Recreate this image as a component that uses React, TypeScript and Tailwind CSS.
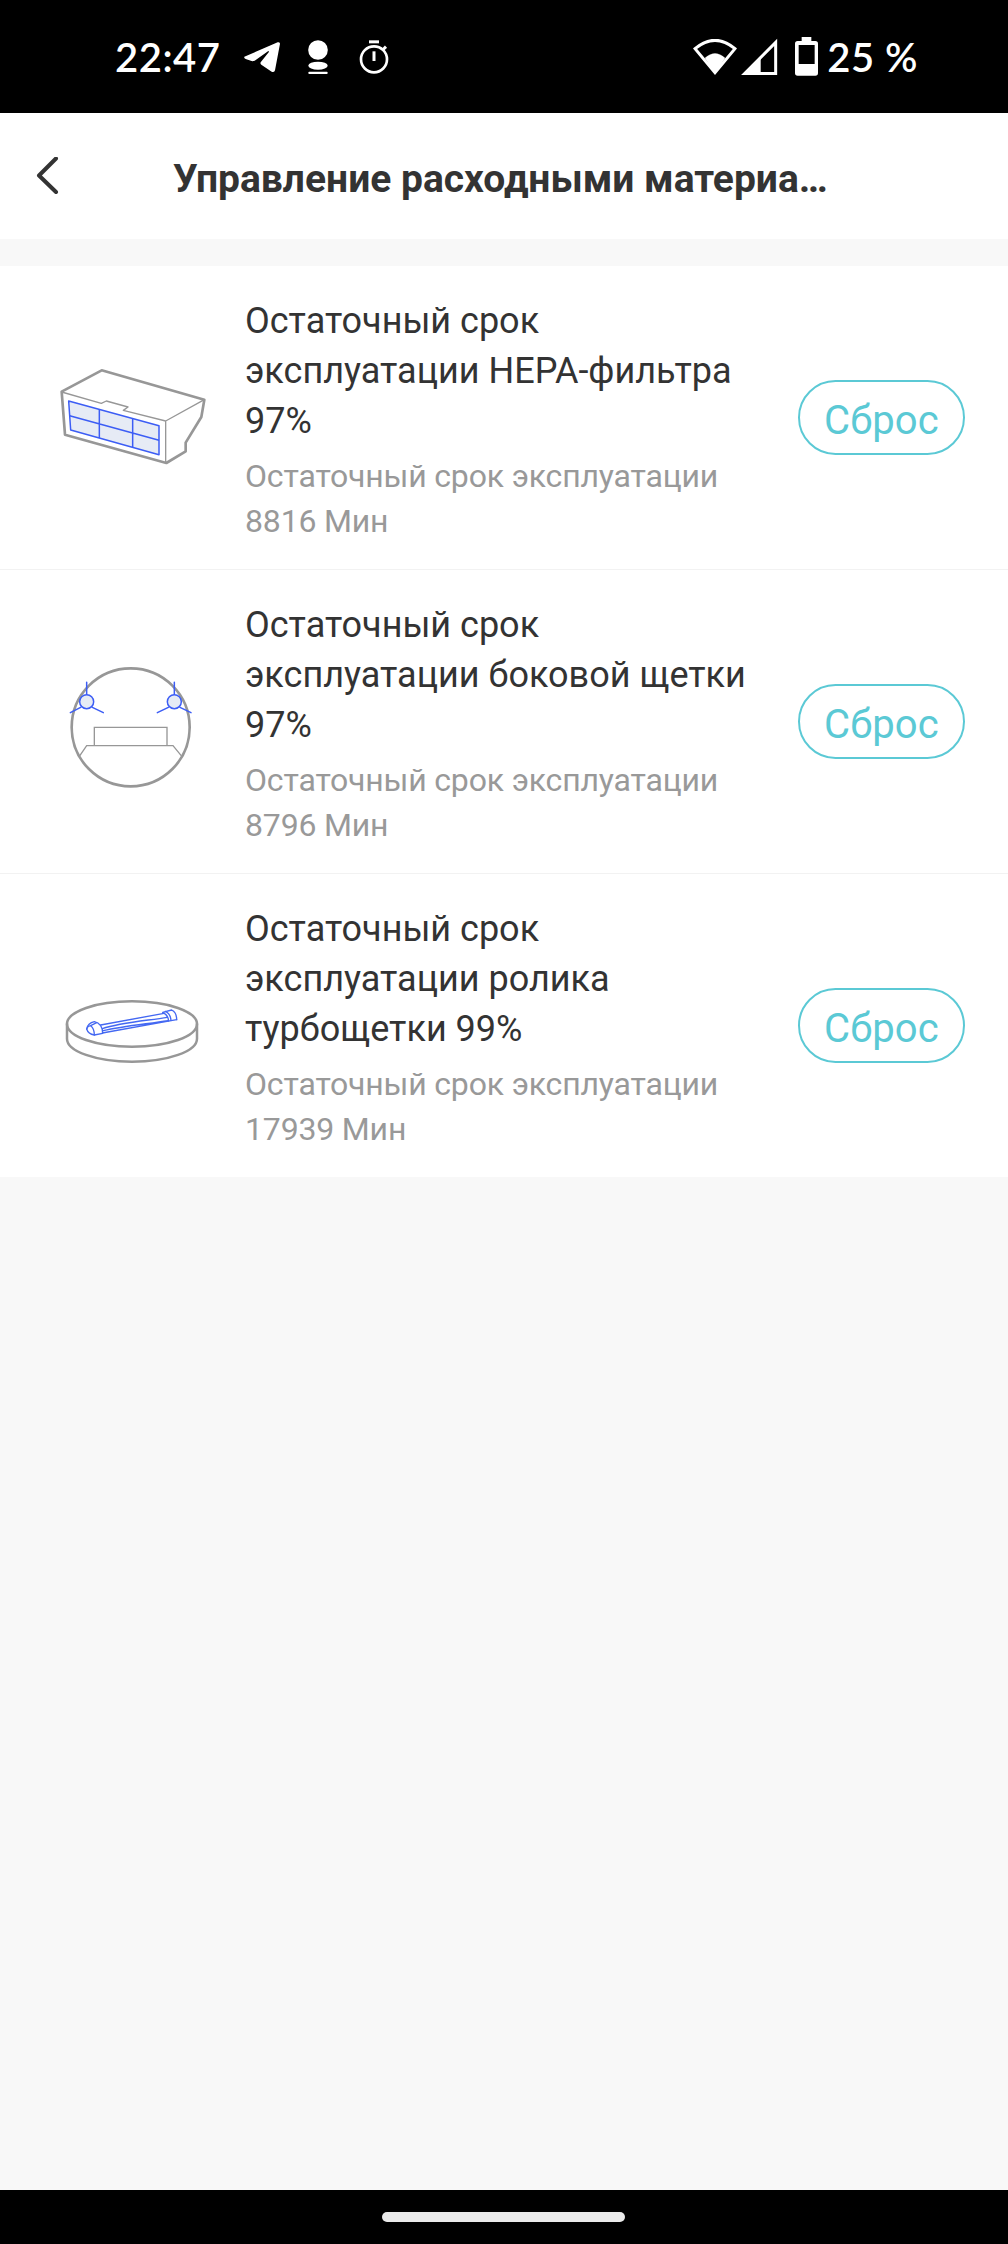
import React from 'react';

interface ConsumableRowProps {
    title: string[];
    minutes: string;
    icon: React.ComponentType;
    last?: boolean;
}

function FilterIcon() {
    return (
        <svg className="h-40 w-40" viewBox="30 -36 480 480" fill="none" strokeLinejoin="round">
            <path d="M65 125L185 61L493 149L484 201L437 278V304L379 339L75 254Z" stroke="#979797" strokeWidth="8" />
            <path d="M65 126L184 160L199 153L264 171L250 181L377 213L493 149M377 213V339" stroke="#979797" strokeWidth="4" />
            <path d="M86 153L357 227V314L92 240Z" fill="#e6ebf5" stroke="#3c5df5" strokeWidth="4.5" />
            <path d="M89 197L357 271M178 178V264M278 205V292" stroke="#3c5df5" strokeWidth="4.5" />
        </svg>
    );
}

function SideBrushIcon() {
    return (
        <svg className="h-40 w-40" viewBox="0 -24 480 480" fill="none" strokeLinecap="round">
            <circle cx="242" cy="232" r="177" stroke="#979797" strokeWidth="8" />
            <path d="M133 287V232H351V287M90 316L110 287H369L393 316" stroke="#979797" strokeWidth="4" />
            <path d="M110 97V134M92 172L61 188M127 172L160 188" stroke="#3c5df5" strokeWidth="4.5" />
            <path d="M373 97V134M355 172L322 188M390 172L423 188" stroke="#3c5df5" strokeWidth="4.5" />
            <circle cx="110" cy="155" r="21" fill="#e6ebf5" stroke="#3c5df5" strokeWidth="4.5" />
            <circle cx="373" cy="155" r="21" fill="#e6ebf5" stroke="#3c5df5" strokeWidth="4.5" />
        </svg>
    );
}

function TurboBrushIcon() {
    return (
        <svg className="h-40 w-40" viewBox="0 -102 480 480" fill="none" strokeLinecap="round" strokeLinejoin="round">
            <ellipse cx="246" cy="132" rx="195" ry="68" stroke="#979797" strokeWidth="7.5" />
            <path d="M51 132V176C51 214 138 245 246 245S441 214 441 176V132" stroke="#979797" strokeWidth="7.5" />
            <g stroke="#4468f2" strokeWidth="4">
                <path d="M152 135L342 100M157 146C210 128 290 122 352 112M160 152C220 138 290 132 354 122M157 159L380 119" />
                <path d="M110 147C112 136 120 128 133 125C149 128 159 142 158 160L133 165C121 163 113 157 110 147Z" />
                <path d="M110 147C112 140 119 137 122 137C130 143 133 153 133 165M122 137L140 128" />
                <path d="M338 97L365 90C374 94 380 104 380 119M338 97C349 102 355 111 356 123M346 94C357 99 362 110 363 121" />
            </g>
        </svg>
    );
}

function StatusBar() {
    return (
        <div className="flex h-[113px] shrink-0 items-center bg-black pr-[90px] pl-[115px] font-['Lato',sans-serif] text-white">
            <span className="w-[129px] text-[40px] leading-none font-semibold tracking-[0.5px]">22:47</span>
            <svg className="h-9 w-9" viewBox="432 62 108 108" fill="currentColor">
                <path d="M433 115Q431 119 437 122L457 129L464 127L504 99Q509 97 506 102L482 132Q480 136 484 139L515 160Q523 164 525 156L540 76Q540 70 533 72Z" />
            </svg>
            <svg className="ml-7 h-9 w-5" viewBox="624 57 60 108" fill="currentColor">
                <circle cx="654" cy="90" r="29.5" />
                <ellipse cx="654" cy="137" rx="29" ry="12" />
                <rect x="625" y="155" width="58" height="7" rx="3" />
            </svg>
            <svg className="ml-[31px] h-9 w-[30px]" viewBox="777 57 90 108" fill="none" stroke="currentColor">
                <circle cx="822" cy="118" r="39" strokeWidth="8" />
                <path d="M807 65.500H837" strokeWidth="9" />
                <path d="M822 94V123" strokeWidth="9" />
                <path d="M848 90L858 80" strokeWidth="9" />
            </svg>
            <div className="ml-auto flex items-center">
                <svg className="h-9 w-11" viewBox="42 56 132 108" fill="none" stroke="currentColor">
                    <path d="M48 85Q108 35 168 85L108 157Z" strokeWidth="9" />
                    <path d="M78 113Q108 86 138 113L108 160Z" fill="currentColor" />
                </svg>
                <svg className="ml-1 h-[38px] w-[37px]" viewBox="186 54 111 114" fill="none" stroke="currentColor">
                    <path d="M197 160.500L290 67V160.500Z" strokeWidth="9" />
                    <path d="M190 164L245 109V164Z" fill="currentColor" stroke="none" />
                </svg>
                <svg className="ml-[17px] h-[39px] w-[23px]" viewBox="348 51 69 117" fill="currentColor">
                    <path
                        fillRule="evenodd"
                        d="M368 51H397V63H409Q417 63 417 71V159Q417 167 409 167H356Q348 167 348 159V71Q348 63 356 63H368ZM359 75V132H407V75Z"
                    />
                </svg>
                <span className="ml-[9px] text-[40px] leading-none font-semibold tracking-[0.5px]">25 %</span>
            </div>
        </div>
    );
}

function ConsumableRow({ title, minutes, icon: Icon, last }: ConsumableRowProps) {
    return (
        <div className={`flex items-center bg-white pr-[43px] pl-[50px] ${last ? 'h-[303px]' : 'h-[304px] border-b border-[#f2f2f2]'}`}>
            <Icon />
            <div className="ml-[35px] flex-1 pt-[5px] whitespace-nowrap">
                <h2 className="text-[36px] leading-[50px] text-[#333333]">
                    {title.map((line) => (
                        <span key={line} className="block">
                            {line}
                        </span>
                    ))}
                </h2>
                <p className="mt-2 text-[32px] leading-[45px] tracking-[-0.17px] text-[#999999]">
                    Остаточный срок эксплуатации
                    <br />
                    {minutes} Мин
                </p>
            </div>
            <button className="h-[75px] w-[167px] rounded-full border-2 border-[#5bc9d5] pt-1.5 text-[40px] leading-none tracking-[0.2px] text-[#5bc9d5]">
                Сброс
            </button>
        </div>
    );
}

export default function App() {
    return (
        <div className="flex h-[2244px] w-[1008px] flex-col bg-[#f8f8f8] font-['Roboto',sans-serif]">
            <StatusBar />

            <header className="flex h-[126px] shrink-0 items-center bg-white pl-9">
                <svg className="mt-0.5 h-10 w-6" viewBox="0 0 24 40" fill="none" stroke="#333333" strokeWidth="4" strokeLinecap="round" strokeLinejoin="round">
                    <path d="M20 1.500L3 18.500L20 35" />
                </svg>
                <h1 className="ml-[113px] pt-1.5 text-[39px] leading-none font-bold whitespace-nowrap text-[#333333]">Управление расходными материа…</h1>
            </header>

            <main className="mt-[27px] flex-1">
                <ConsumableRow title={['Остаточный срок', 'эксплуатации HEPA-фильтра', '97%']} minutes="8816" icon={FilterIcon} />
                <ConsumableRow title={['Остаточный срок', 'эксплуатации боковой щетки', '97%']} minutes="8796" icon={SideBrushIcon} />
                <ConsumableRow title={['Остаточный срок', 'эксплуатации ролика', 'турбощетки 99%']} minutes="17939" icon={TurboBrushIcon} last />
            </main>

            {/* Gesture navigation bar */}
            <div className="flex h-[54px] shrink-0 items-center justify-center bg-black pr-0.5">
                <div className="h-2.5 w-[243px] rounded-full bg-[#ebebeb]" />
            </div>
        </div>
    );
}
